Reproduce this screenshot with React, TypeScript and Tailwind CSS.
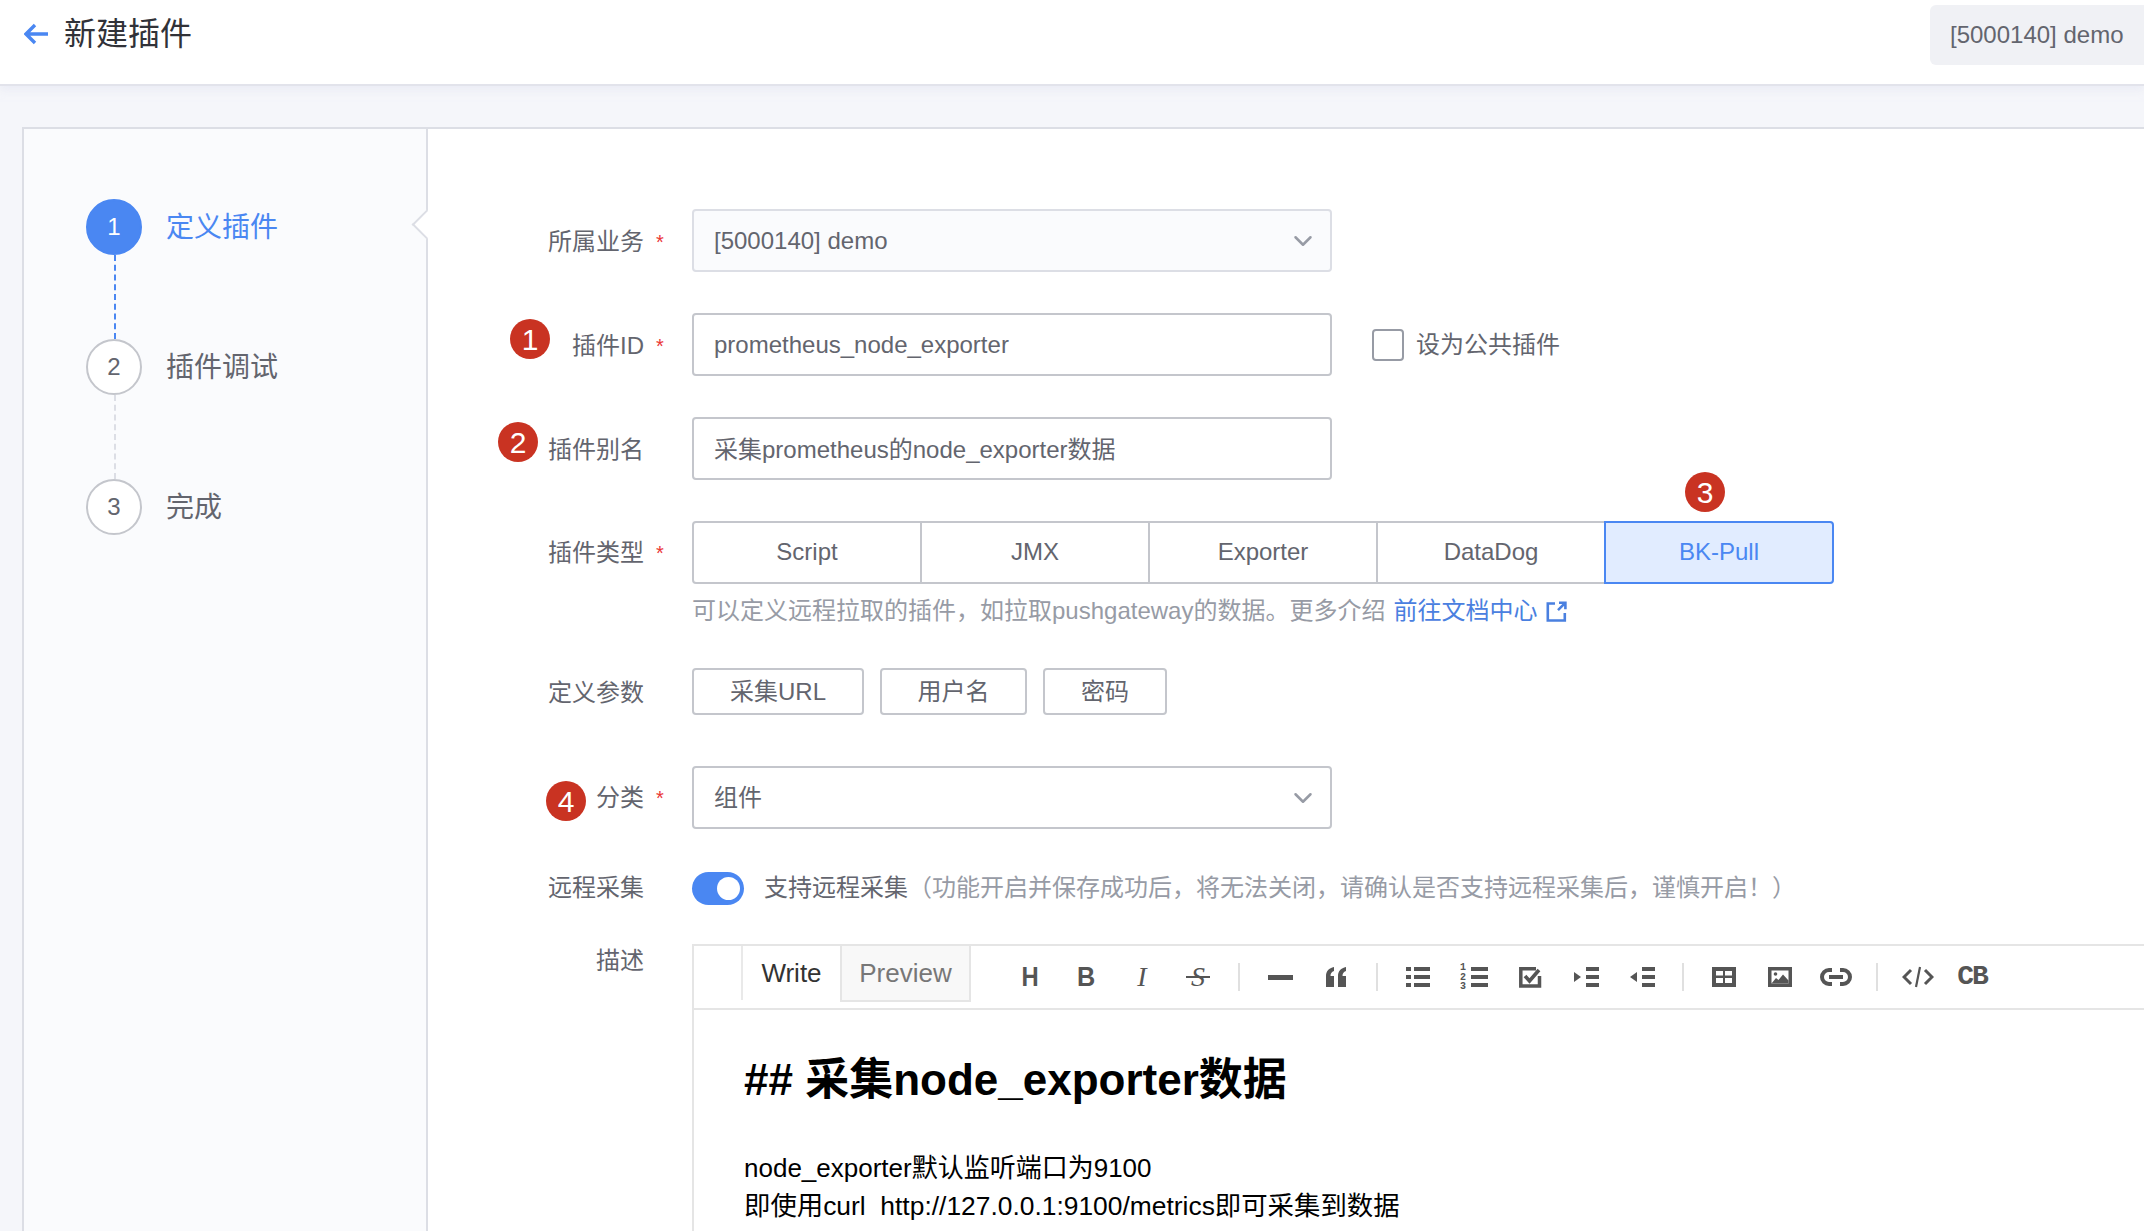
import React from "react";
import { ChevronDown } from "lucide-react";

function Badge({ n, className }: { n: string; className: string }) {
  return (
    <div className={"absolute w-10 h-10 rounded-full bg-[#c93322] text-white flex items-center justify-center text-[30px] font-medium " + className}>
      {n}
    </div>
  );
}

function Label({ text, required, flat }: { text: string; required?: boolean; flat?: boolean }) {
  return (
    <div className={"w-[264px] shrink-0 flex justify-end text-[24px] leading-[34px] text-[#63656e] " + (flat ? "" : "translate-y-px")}>
      <span>{text}</span>
      <span className="w-[48px] pl-[12px] text-[#ea3636] text-[20px]">{required ? "*" : ""}</span>
    </div>
  );
}

function Step({ n, text, active, line }: { n: string; text: string; active?: boolean; line?: string }) {
  return (
    <div className="relative h-[140px] flex items-start">
      <div className={"w-14 h-14 rounded-full flex items-center justify-center text-[24px] border-2 " + (active ? "bg-[#4a87f2] border-[#4a87f2] text-white" : "bg-white border-[#c4c6cc] text-[#63656e]")}>
        {n}
      </div>
      <div className={"ml-6 text-[28px] leading-[58px] " + (active ? "text-[#4a87f2]" : "text-[#63656e]")}>{text}</div>
      {line && <div className={"absolute left-[28px] top-[56px] h-[84px] border-l-2 border-dashed " + line} />}
    </div>
  );
}

const Sep = () => <div className="w-[2px] h-7 bg-[#e0e0e0] mx-[12px] shrink-0" />;
const Tool = ({ children }: { children: React.ReactNode }) => (
  <div className="relative w-[56px] h-8 flex items-center justify-center text-[#555] shrink-0">{children}</div>
);

const c = "#555";
const UlIcon = () => (
  <svg width="24" height="20" viewBox="0 0 24 20" fill={c}>
    <rect x="0" y="0" width="5" height="4" /><rect x="8" y="0" width="16" height="4" />
    <rect x="0" y="8" width="5" height="4" /><rect x="8" y="8" width="16" height="4" />
    <rect x="0" y="16" width="5" height="4" /><rect x="8" y="16" width="16" height="4" />
  </svg>
);
const OlIcon = () => (
  <div className="relative w-[28px] h-[28px]">
    <div className="absolute left-0 top-0 w-[9px] text-[10px] leading-[9.5px] font-bold text-[#555] font-['Liberation_Mono',monospace]">1<br />2<br />3</div>
    <svg className="absolute left-[11px] top-[4px]" width="17" height="20" viewBox="0 0 17 20" fill={c}>
      <rect y="0" width="17" height="4" /><rect y="8" width="17" height="4" /><rect y="16" width="17" height="4" />
    </svg>
  </div>
);
const CheckIcon = () => (
  <svg width="23" height="21" viewBox="0 0 23 21" fill="none" stroke={c}>
    <path d="M20.5 9v10H1.8V1.8H17" strokeWidth="3.5" />
    <path d="M6 9l4.5 5L20 3" strokeWidth="3.6" />
  </svg>
);
const IndentIcon = ({ flip }: { flip?: boolean }) => (
  <svg width="25" height="20" viewBox="0 0 25 20" fill={c}>
    {flip ? <path d="M7 5v10L0 10z" /> : <path d="M0 5v10l7-5z" />}
    <rect x="12" y="0" width="13" height="4" /><rect x="12" y="8" width="13" height="4" /><rect x="12" y="16" width="13" height="4" />
  </svg>
);
const TableIcon = () => (
  <svg width="24" height="20" viewBox="0 0 24 20">
    <rect width="24" height="20" fill={c} />
    <rect x="4" y="4" width="7" height="4.5" fill="#fff" /><rect x="13" y="4" width="7" height="4.5" fill="#fff" />
    <rect x="4" y="11" width="7" height="5" fill="#fff" /><rect x="13" y="11" width="7" height="5" fill="#fff" />
  </svg>
);
const ImageIcon = () => (
  <svg width="24" height="20" viewBox="0 0 24 20">
    <rect width="24" height="20" fill={c} />
    <rect x="3.5" y="3.5" width="17" height="13" fill="#fff" />
    <circle cx="7.5" cy="7" r="1.8" fill={c} />
    <path d="M3.5 16.5L8 11l2.5 2L15 7.5l5.5 6v3z" fill={c} />
  </svg>
);
const LinkIcon = () => (
  <svg width="32" height="20" viewBox="0 0 32 20" fill="none" stroke={c} strokeWidth="4">
    <path d="M12 3H9a7 7 0 0 0 0 14h3M20 3h3a7 7 0 0 1 0 14h-3M9 10h14" />
  </svg>
);
const CodeIcon = () => (
  <svg width="32" height="22" viewBox="0 0 32 22" fill="none" stroke={c} strokeWidth="3">
    <path d="M9 4l-7 7 7 7M23 4l7 7-7 7" />
    <path d="M18 1l-4 20" strokeWidth="2.2" />
  </svg>
);
const ExternalIcon = () => (
  <svg width="21" height="21" viewBox="0 0 21 21" fill="none" stroke="#4a80e0" strokeWidth="2.6" className="ml-[9px]">
    <path d="M9 2.5H1.8v17h17V12" />
    <path d="M13 1.8h6.4v6.4M19 2.2l-7 7" />
  </svg>
);

export default function App() {
  return (
    <div className="relative w-[2144px] h-[1231px] overflow-hidden bg-[#f5f6fa] text-[#63656e] font-['Liberation_Sans','Noto_Sans_CJK_SC',sans-serif]">
      <header className="relative z-10 h-[86px] bg-white border-b-2 border-[#e2e3eb] shadow-[0_4px_8px_rgba(225,228,240,0.55)] flex items-start justify-between">
        <div className="flex items-center h-[68px] pl-6">
          <svg width="24" height="22" viewBox="0 0 24 22" fill="none" stroke="#4a87f2" strokeWidth="3.4">
            <path d="M24 11H3M11 2l-9 9 9 9" />
          </svg>
          <h1 className="ml-4 text-[32px] text-[#313238] font-normal">新建插件</h1>
        </div>
        <div className="mt-[5px] w-[214px] h-[60px] pl-5 rounded-l-md bg-[#f0f1f5] flex items-center text-[24px] text-[#63656e]">
          [5000140] demo
        </div>
      </header>

      <div className="mt-[41px] ml-[22px] w-[2200px] h-[1200px] flex bg-white border-t-2 border-l-2 border-[#dcdee5]">
        <aside className="relative w-[404px] shrink-0 bg-[#fafbfd] border-r-2 border-[#dcdee5] pt-[70px] pl-[62px]">
          <Step n="1" text="定义插件" active line="border-[#4a87f2]" />
          <Step n="2" text="插件调试" line="border-[#dcdee5]" />
          <Step n="3" text="完成" />
          <div className="absolute right-[-11px] top-[85px] w-[21px] h-[21px] rotate-45 bg-white border-l-2 border-b-2 border-[#dcdee5]" />
        </aside>

        <main className="flex-1 pt-[80px]">
          <div className="flex items-center h-[63px]">
            <Label text="所属业务" required />
            <div className="w-[640px] h-full px-5 flex items-center justify-between bg-[#fafbfd] border-2 border-[#dcdee5] rounded text-[24px]">
              <span>[5000140] demo</span>
              <ChevronDown size={30} strokeWidth={2} className="text-[#979ba5] mr-[-8px]" />
            </div>
          </div>

          <div className="flex items-center h-[63px] mt-[41px]">
            <Label text="插件ID" required />
            <div className="w-[640px] h-full px-5 flex items-center border-2 border-[#c4c6cc] rounded text-[24px]">
              prometheus_node_exporter
            </div>
            <div className="ml-10 w-8 h-8 rounded border-2 border-[#979ba5]" />
            <span className="ml-3 text-[24px]">设为公共插件</span>
          </div>

          <div className="flex items-center h-[63px] mt-[41px]">
            <Label text="插件别名" />
            <div className="w-[640px] h-full px-5 flex items-center border-2 border-[#c4c6cc] rounded text-[24px]">
              <span className="translate-y-px">采集prometheus的node_exporter数据</span>
            </div>
          </div>

          <div className="flex items-center h-[63px] mt-[41px]">
            <Label text="插件类型" required flat />
            <div className="flex h-full text-[24px]">
              <div className="w-[230px] pb-[2px] flex items-center justify-center border-2 border-[#c4c6cc] rounded-l">Script</div>
              <div className="w-[228px] pb-[2px] flex items-center justify-center border-y-2 border-r-2 border-[#c4c6cc]">JMX</div>
              <div className="w-[228px] pb-[2px] flex items-center justify-center border-y-2 border-r-2 border-[#c4c6cc]">Exporter</div>
              <div className="w-[228px] pb-[2px] flex items-center justify-center border-y-2 border-r-2 border-[#c4c6cc]">DataDog</div>
              <div className="w-[230px] pb-[2px] ml-[-2px] flex items-center justify-center border-2 border-[#4a87f2] bg-[#e1ecff] text-[#4a87f2] rounded-r">BK-Pull</div>
            </div>
          </div>

          <div className="ml-[264px] mt-[9px] h-[36px] flex items-center text-[24px] text-[#979ba5]">
            可以定义远程拉取的插件，如拉取pushgateway的数据。更多介绍
            <span className="ml-2 text-[#4a80e0]">前往文档中心</span>
            <ExternalIcon />
          </div>

          <div className="flex items-center h-[47px] mt-[39px]">
            <Label text="定义参数" />
            <div className="flex gap-4 h-full text-[24px]">
              <div className="w-[172px] flex items-center justify-center border-2 border-[#c4c6cc] rounded">采集URL</div>
              <div className="w-[147px] flex items-center justify-center border-2 border-[#c4c6cc] rounded">用户名</div>
              <div className="w-[124px] flex items-center justify-center border-2 border-[#c4c6cc] rounded">密码</div>
            </div>
          </div>

          <div className="flex items-center h-[63px] mt-[51px]">
            <Label text="分类" required flat />
            <div className="w-[640px] h-full px-5 flex items-center justify-between border-2 border-[#c4c6cc] rounded text-[24px]">
              <span>组件</span>
              <ChevronDown size={30} strokeWidth={2} className="text-[#979ba5] mr-[-8px]" />
            </div>
          </div>

          <div className="flex items-center h-[34px] mt-[42px]">
            <Label text="远程采集" flat />
            <div className="relative w-[52px] h-[33px] rounded-full bg-[#4a87f2]">
              <div className="absolute right-[4px] top-[5px] w-[23px] h-[23px] rounded-full bg-white" />
            </div>
            <span className="ml-[20px] text-[24px]">支持远程采集</span>
            <span className="text-[24px] text-[#979ba5]">（功能开启并保存成功后，将无法关闭，请确认是否支持远程采集后，谨慎开启！）</span>
          </div>

          <div className="flex mt-[39px]">
            <Label text="描述" flat />
            <div className="flex-1 min-h-[500px] border-l-2 border-t-2 border-[#e5e5e5] bg-white">
              <div className="h-[64px] flex items-stretch border-b-2 border-[#e5e5e5]">
                <div className="w-[49px] border-r-2 border-[#e9e9e9] mb-[8px]" />
                <div className="w-[97px] pt-[10px] text-center text-[26px] text-[#333] leading-[34px]">Write</div>
                <div className="w-[131px] mb-[6px] pt-[10px] text-center text-[26px] leading-[34px] text-[#777] bg-[#f8f8f8] border-x-2 border-b-2 border-[#e5e5e5]">Preview</div>
                <div className="ml-[31px] flex items-center">
                  <Tool><span className="text-[28px] leading-none font-bold scale-x-85">H</span></Tool>
                  <Tool><span className="text-[28px] leading-none font-bold scale-x-90">B</span></Tool>
                  <Tool><span className="text-[28px] leading-none italic font-['Liberation_Serif',serif]">I</span></Tool>
                  <Tool>
                    <span className="text-[28px] leading-none italic font-['Liberation_Serif',serif]">S</span>
                    <div className="absolute left-[16px] w-[24px] h-[2px] bg-[#555] top-[15px]" />
                  </Tool>
                  <Sep />
                  <Tool><div className="w-[25px] h-[5px] bg-[#555]" /></Tool>
                  <Tool>
                    <svg width="20" height="20" viewBox="0 0 20 20" fill={c}>
                      <path d="M0 20V9C0 4 3 1 8 0v4C5.500 5 4.500 6.500 4.500 9H8v11zM12 20V9c0-5 3-8 8-9v4c-2.500 1-3.500 2.500-3.500 5H20v11z" />
                    </svg>
                  </Tool>
                  <Sep />
                  <Tool><UlIcon /></Tool>
                  <Tool><OlIcon /></Tool>
                  <Tool><CheckIcon /></Tool>
                  <Tool><IndentIcon /></Tool>
                  <Tool><IndentIcon flip /></Tool>
                  <Sep />
                  <Tool><TableIcon /></Tool>
                  <Tool><ImageIcon /></Tool>
                  <Tool><LinkIcon /></Tool>
                  <Sep />
                  <Tool><CodeIcon /></Tool>
                  <Tool><span className="font-bold text-[28px] leading-none tracking-[-2px] -translate-x-[2px] font-['Liberation_Mono',monospace]">CB</span></Tool>
                </div>
              </div>
              <div className="pl-[50px] pt-[40px] text-black">
                <div className="text-[44px] leading-[60px] font-bold">## 采集node_exporter数据</div>
                <div className="mt-[39px] text-[26px] leading-[38px]">node_exporter默认监听端口为9100</div>
                <div className="text-[26.4px] leading-[38px] whitespace-pre">即使用curl  http://127.0.0.1:9100/metrics即可采集到数据</div>
              </div>
            </div>
          </div>
        </main>
      </div>

      <Badge n="1" className="left-[510px] top-[319px]" />
      <Badge n="2" className="left-[498px] top-[422px]" />
      <Badge n="3" className="left-[1685px] top-[472px]" />
      <Badge n="4" className="left-[546px] top-[781px]" />
    </div>
  );
}
